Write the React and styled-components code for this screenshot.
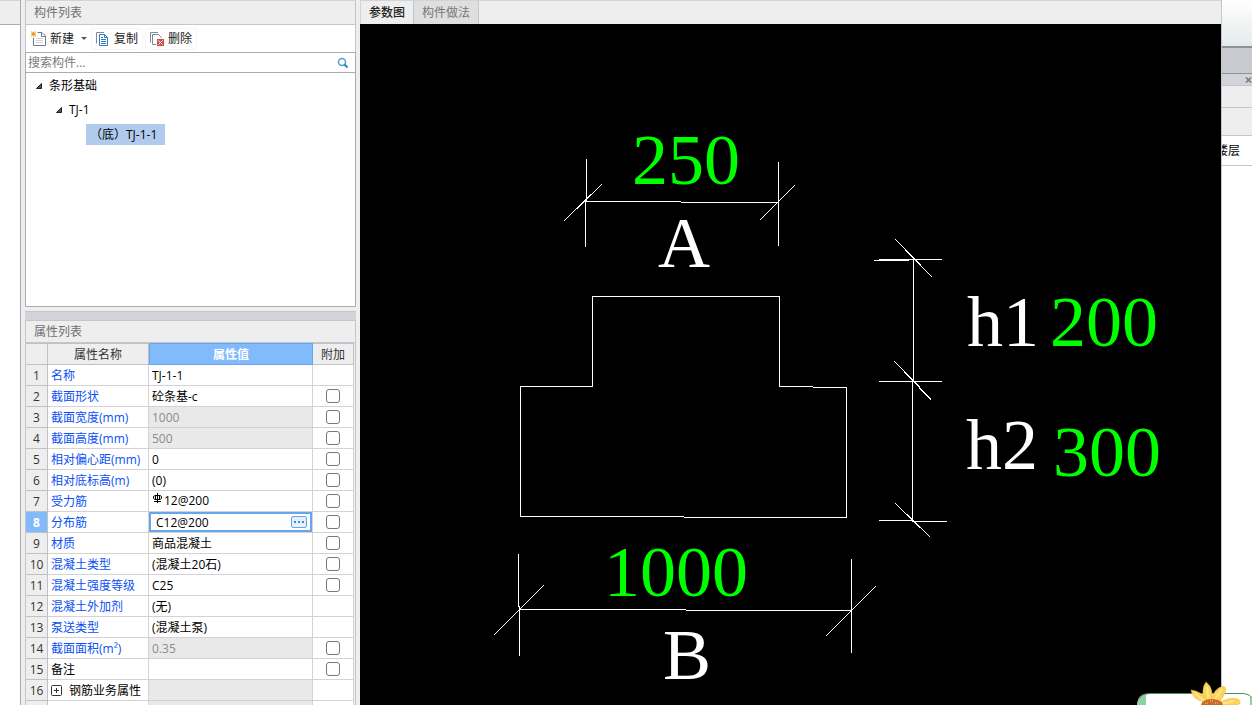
import React, { useState } from 'react';
import styled, { createGlobalStyle } from 'styled-components';

const GlobalStyle = createGlobalStyle`
  * {
    box-sizing: border-box;
  }
  body {
    margin: 0;
    font: 12px/16px "Open Sans", "Noto Sans CJK SC", sans-serif;
    color: #000;
    background: #eeeeee;
  }
  button, input {
    font: inherit;
    color: inherit;
    margin: 0;
  }
`;

const Page = styled.div`
  position: relative;
  display: grid;
  grid-template-columns: 21px 335px minmax(0, 1fr) 30px;
  height: 100vh;
  overflow: hidden;
`;

const LeftEdge = styled.aside`
  display: flex;
  flex-direction: column;
  background: #fff;
  border-right: 1px solid #a9abae;
`;

const LeftEdgeHeader = styled.div`
  height: 25px;
  background: #eeeeee;
  border-top: 1px solid #d3d4d9;
  border-bottom: 1px solid #a9abae;
`;

const Sidebar = styled.div`
  display: flex;
  flex-direction: column;
  min-height: 0;
  padding-left: 4px;
`;

const PanelTitle = styled.h2`
  flex: none;
  height: ${props => props.$tall ? '23px' : '25px'};
  margin: 0;
  padding-left: 8px;
  font-size: 12px;
  font-weight: 400;
  line-height: ${props => props.$tall ? '21px' : '23px'};
  color: #707070;
  border: 1px solid #c4c6ce;
  border-top-color: ${props => props.$tall ? '#c4c6ce' : '#d3d4d9'};
`;

const Toolbar = styled.div`
  flex: none;
  display: flex;
  align-items: center;
  height: 27px;
  gap: 2px;
  padding-left: 2px;
  background: #fff;
  border: solid #c4c6ce;
  border-width: 0 1px;
`;

const ToolButton = styled.button`
  display: flex;
  align-items: center;
  gap: 3px;
  height: 22px;
  padding: ${props => props.$first ? '0 1px 0 2px' : '0 4px 0 3px'};
  color: #222;
  background: none;
  border: 1px solid ${props => props.$first ? 'transparent' : '#f6f6f6'};
  border-radius: 3px;
  svg {
    flex: none;
  }
`;

const Caret = styled.span`
  margin-left: 4px;
  border: 3px solid transparent;
  border-top-color: #555;
  border-bottom-width: 0;
`;

const SearchBox = styled.label`
  flex: none;
  display: flex;
  align-items: center;
  height: 21px;
  padding: 0 6px 0 2px;
  background: #fff;
  border: 1px solid #acacac;
`;

const SearchInput = styled.input`
  flex: 1;
  min-width: 0;
  height: 17px;
  padding: 0;
  border: 0;
  outline: 0;
  background: none;
  &::placeholder {
    color: #7a7a7a;
    opacity: 1;
  }
`;

const Tree = styled.ul`
  flex: none;
  height: 234px;
  margin: 0;
  padding: 1px 0 0;
  list-style: none;
  background: #fff;
  border: 1px solid #acacac;
  border-top: 0;
`;

const TreeRow = styled.li`
  display: flex;
  align-items: center;
  height: 24px;
  gap: 6px;
  padding-left: ${props => props.$indent};
`;

const TreeLabel = styled.span`
  padding: ${props => props.$selected ? '2px 8px 2px 4px' : '0'};
  line-height: ${props => props.$selected ? '17px' : '16px'};
  background: ${props => props.$selected ? '#b0cbee' : 'none'};
`;

const Splitter = styled.div`
  flex: none;
  height: 9px;
  margin-top: 4px;
  background: #d3d4d9;
  border-top: 1px solid #c4c6ce;
`;

const TableArea = styled.div`
  flex: 1;
  min-height: 0;
  overflow: hidden;
  padding-right: 1px;
  background: #eeeeee;
  border: solid #c4c6ce;
  border-width: 0 1px;
`;

const PropTable = styled.table`
  width: 100%;
  table-layout: fixed;
  border-collapse: separate;
  border-spacing: 0;
`;

const HeadCell = styled.th`
  height: 22px;
  padding: 2px 0 0;
  font-weight: ${props => props.$active ? '700' : '400'};
  color: ${props => props.$active ? '#fff' : '#333'};
  background: ${props => props.$active ? '#82bbfb' : '#eeeeee'};
  border: 1px solid ${props => props.$active ? '#65a7ec' : '#bfc1c6'};
  border-left-width: ${props => props.$active ? '1px' : '0'};
`;

const RowNumber = styled.th`
  height: 21px;
  padding: 2px 0 0;
  font-weight: ${props => props.$active ? '700' : '400'};
  color: ${props => props.$active ? '#fff' : '#333'};
  background: ${props => props.$active ? '#82bbfb' : '#eeeeee'};
  border: solid #bfc1c6;
  border-width: 0 1px 1px 0;
`;

const Cell = styled.td`
  height: 21px;
  padding: 2px 0 0 3px;
  white-space: nowrap;
  overflow: hidden;
  color: ${props => props.$color || '#000'};
  background: ${props => props.$locked ? '#e9e9e9' : '#fff'};
  border: solid #d3d3d3;
  border-width: 0 1px 1px 0;
`;

const EditCell = styled(Cell)`
  padding: 0;
`;

const RebarCell = styled(Cell)`
  padding-top: 0;
`;

const CheckCell = styled(Cell)`
  padding: 0;
  text-align: center;
`;

const CheckBox = styled.input`
  appearance: none;
  display: block;
  width: 14px;
  height: 14px;
  margin: 0 auto;
  background: #fff;
  border: 1px solid #777;
  border-radius: 3px;
`;

const ValueLine = styled.span`
  display: flex;
  align-items: center;
  gap: 6px;
`;

const RebarLine = styled(ValueLine)`
  align-items: flex-start;
  gap: 1px;
  padding-left: 1px;
`;

const Editor = styled.div`
  display: flex;
  align-items: center;
  height: 20px;
  padding: 0 3px 0 5px;
  border: 2px solid #65a7ec;
`;

const EditorInput = styled.input`
  flex: 1;
  min-width: 0;
  height: 16px;
  padding: 1px 0 0;
  border: 0;
  outline: 0;
  background: none;
`;

const MoreButton = styled.button`
  display: flex;
  align-items: center;
  justify-content: center;
  width: 16px;
  height: 12px;
  padding: 0;
  background: #e4f1fd;
  border: 1px solid #65a7ec;
  border-radius: 2px;
`;

const Main = styled.main`
  display: flex;
  flex-direction: column;
  min-width: 0;
  min-height: 0;
  margin-left: 4px;
  border-right: 1px solid #c4c6ce;
`;

const Tabs = styled.div`
  flex: none;
  display: flex;
  height: 24px;
  border: solid #d3d4d9;
  border-width: 1px 0 0 1px;
`;

const Tab = styled.button`
  padding: 0 8px;
  color: ${props => props.$active ? '#222' : '#777'};
  font-weight: ${props => props.$active ? '500' : '400'};
  background: ${props => props.$active ? '#eeeeee' : '#dfdfdf'};
  border: solid #c4c6ce;
  border-width: 0 1px 0 0;
`;

const Canvas = styled.div`
  flex: 1;
  min-height: 0;
  background: #000;
  svg {
    display: block;
    width: 100%;
    height: 100%;
  }
`;

const DrawingText = styled.text`
  font: 72px "Liberation Serif", serif;
  fill: ${props => props.$value ? '#00ff00' : '#fff'};
  text-anchor: ${props => props.$centered ? 'middle' : 'start'};
`;

const RightEdge = styled.aside`
  display: flex;
  flex-direction: column;
  overflow: hidden;
  background: #fff;
`;

const EdgeBand = styled.div`
  flex: none;
  display: flex;
  align-items: center;
  justify-content: flex-end;
  height: ${props => props.$height};
  padding-right: ${props => props.$pad || '0'};
  background: ${props => props.$background};
  border-bottom: ${props => props.$line || '1px solid #c4c6ce'};
  white-space: nowrap;
`;

const CloseButton = styled.button`
  display: flex;
  padding: 0;
  background: none;
  border: 0;
`;

const Sticker = styled.div`
  position: absolute;
  right: 0;
  bottom: 0;
  svg {
    display: block;
  }
`;

const NewIcon = () => (
  <svg width="16" height="16" viewBox="0 0 16 16" fill="none" aria-hidden="true">
    <path d="M6.5 1.5H11L14.5 5V14.5H2.5V7" stroke="#6e7d88" />
    <path d="M10.5 1.5V5.5H14.5" stroke="#6e7d88" />
    <path d="M5 7.5H12M5 9.5H12M5 11.5H12" stroke="#cfd5d9" />
    <path d="M0 0.5H1V1.5H2V0.5H3V1.5H4V0.5H5V1.5H4V2.5H5V3.5H4V4.5H5V5.5H4V4.5H3V5.5H2V4.5H1V5.5H0V4.5H1V3.5H0V2.5H1V1.5H0Z" fill="#f39a1d" />
  </svg>
);

const CopyIcon = () => (
  <svg width="16" height="16" viewBox="0 0 16 16" fill="none" aria-hidden="true">
    <path d="M1.5 12.5V1.5H9" stroke="#7b8a95" />
    <path d="M4.5 3.5H9.5L12.5 6.5V14.5H4.5Z" stroke="#2f7ac6" />
    <path d="M9.5 3.5V6.5H12.5" stroke="#2f7ac6" />
    <path d="M6 6.5H8M6 8.5H11M6 10.5H11M6 12.5H11" stroke="#2f7ac6" />
  </svg>
);

const DeleteIcon = () => (
  <svg width="16" height="16" viewBox="0 0 16 16" fill="none" aria-hidden="true">
    <path d="M1.5 11.5V1.5H9" stroke="#7b8a95" />
    <path d="M7 13.5H3.5V3.5H9.5L12.5 6.5V7" stroke="#7b8a95" />
    <rect x="8" y="8" width="7" height="7" fill="#d2504f" />
    <path d="M9.5 9.5L13.5 13.5M13.5 9.5L9.5 13.5" stroke="#fff" />
  </svg>
);

const SearchIcon = () => (
  <svg width="12" height="12" viewBox="0 0 12 12" fill="none" aria-hidden="true">
    <circle cx="5" cy="5" r="3.5" stroke="#4b9fd2" strokeWidth="1.5" />
    <path d="M7.5 7.5L10.5 10.5" stroke="#2c7fb8" strokeWidth="2" />
  </svg>
);

const ExpandedIcon = () => (
  <svg width="8" height="8" viewBox="0 0 8 8" aria-hidden="true">
    <path d="M6.5 1.5V6.5H1.5Z" fill="#555" stroke="#222" />
  </svg>
);

const PlusIcon = () => (
  <svg width="12" height="12" viewBox="0 0 12 12" fill="none" stroke="#333" aria-hidden="true">
    <rect x="0.5" y="0.5" width="10" height="10" rx="1" />
    <path d="M3 5.5H8M5.5 3V8" />
  </svg>
);

const RebarIcon = () => (
  <svg width="10" height="12" viewBox="0 0 10 12" fill="none" stroke="#000" aria-hidden="true">
    <path d="M4.5 0V10M2.5 2V7M6.5 2V7M1 8.5H8" />
    <path d="M2 2.5H7L8.5 3.5V5.5L7 6.5H2L0.5 5.5V3.5Z" />
  </svg>
);

const Flower = () => (
  <svg width="116" height="24" viewBox="0 0 116 24" aria-hidden="true">
    <path d="M1 24Q2 13 13 13H104Q115 13 116 20V24Z" fill="#fff" />
    <path d="M1 24Q2 13 10 13V24Z" fill="#8ed0a4" />
    <path d="M114 24V15L116 18V24Z" fill="#8ed0a4" />
    <path d="M3 18Q6 12.5 13 12.5H106Q113 12.5 116 17" fill="none" stroke="#4c9154" />
    <g fill="#fbd45c" stroke="#eeb03a" strokeWidth="0.5">
      <path d="M68 21Q65 7 70 1Q78 7 76 21Z" />
      <path d="M68 21Q56 18 55 9Q65 10 71 19Z" />
      <path d="M75 20Q77 8 87 5Q94 7 83 22Z" />
      <path d="M81 24Q91 15 102 18Q107 22 101 24Z" />
    </g>
    <path d="M59 12L68 20M71 6L72 17M86 8L79 18M98 20L86 23" stroke="#ffe58c" strokeWidth="2" />
    <ellipse cx="76" cy="24" rx="11" ry="6" fill="#c46c2e" />
    <path d="M69 22H72M74 20H77M79 22H82" stroke="#ed9b4a" strokeWidth="2" strokeDasharray="1 1" />
  </svg>
);

const BLUE = '#0a50f5';
const GREY = '#8c8c8c';

const rows = [
  { name: '名称', value: 'TJ-1-1', noCheck: true },
  { name: '截面形状', value: '砼条基-c' },
  { name: '截面宽度(mm)', value: '1000', locked: true },
  { name: '截面高度(mm)', value: '500', locked: true },
  { name: '相对偏心距(mm)', value: '0' },
  { name: '相对底标高(m)', value: '(0)' },
  { name: '受力筋', value: '12@200', rebar: true },
  { name: '分布筋', value: 'C12@200', editing: true },
  { name: '材质', value: '商品混凝土' },
  { name: '混凝土类型', value: '(混凝土20石)' },
  { name: '混凝土强度等级', value: 'C25' },
  { name: '混凝土外加剂', value: '(无)', noCheck: true },
  { name: '泵送类型', value: '(混凝土泵)', noCheck: true },
  { name: '截面面积(m²)', value: '0.35', locked: true },
  { name: '备注', value: '', plain: true },
  { name: '钢筋业务属性', value: '', locked: true, plain: true, group: true, noCheck: true },
  { name: '', value: '', locked: true, noCheck: true },
];

const ValueCell = ({ row }) => {
  const [value, setValue] = useState(row.value);
  if (row.editing) {
    return (
      <EditCell>
        <Editor>
          <EditorInput aria-label={row.name} value={value} onChange={e => setValue(e.target.value)} />
          <MoreButton type="button" aria-label="更多">
            <svg width="10" height="2" viewBox="0 0 10 2" aria-hidden="true">
              <path d="M0 1H2M4 1H6M8 1H10" stroke="#3c87cf" strokeWidth="2" />
            </svg>
          </MoreButton>
        </Editor>
      </EditCell>
    );
  }
  if (row.rebar) {
    return <RebarCell><RebarLine><RebarIcon />{value}</RebarLine></RebarCell>;
  }
  return <Cell $locked={row.locked} $color={row.locked ? GREY : '#000'}>{value}</Cell>;
};

const PropertyTable = () => (
  <PropTable>
    <colgroup>
      <col style={{ width: 22 }} />
      <col style={{ width: 101 }} />
      <col />
      <col style={{ width: 41 }} />
    </colgroup>
    <thead>
      <tr>
        <HeadCell />
        <HeadCell>属性名称</HeadCell>
        <HeadCell $active>属性值</HeadCell>
        <HeadCell>附加</HeadCell>
      </tr>
    </thead>
    <tbody>
      {rows.map((row, index) => (
        <tr key={index}>
          <RowNumber scope="row" $active={row.editing}>{row.name ? index + 1 : ''}</RowNumber>
          <Cell $color={row.plain ? '#000' : BLUE}>
            {row.group ? <ValueLine><PlusIcon />{row.name}</ValueLine> : row.name}
          </Cell>
          <ValueCell row={row} />
          <CheckCell>
            {!row.noCheck && <CheckBox type="checkbox" aria-label={`附加 ${row.name}`} />}
          </CheckCell>
        </tr>
      ))}
    </tbody>
  </PropTable>
);

const SectionDrawing = () => (
  <svg viewBox="0 0 861 681" role="img" aria-label="砼条基-c">
    <g transform="translate(0.5 0.5)" fill="none" stroke="#fff" strokeLinecap="square" shapeRendering="crispEdges">
      {/* footing outline */}
      <path d="M160 492V362H232V272H419V362H452M453 363H486V493H324M323 492H160" />
      {/* A */}
      <path d="M226 135V177M225 177V222M418 138V221M223 177H320M321 178H418" />
      <path d="M204 196L241 160M400 195L434 161" />
      {/* B */}
      <path d="M158 530V582M159 582V631M491 535V628M159 585H325M326 586H491" />
      <path d="M134 610L183 561M466 611L515 562" />
      {/* h1, h2 */}
      <path d="M553 234V356M552 356V496M519 235H581M514 236H548M519 357H581M519 496H552M552 497H586" />
      <path d="M535 215L571 252M534 337L570 374M554 358L570 375M535 479L569 512" />
    </g>
    <DrawingText $value x="272" y="160">250</DrawingText>
    <DrawingText $centered x="324" y="243">A</DrawingText>
    <DrawingText x="607" y="322">h1</DrawingText>
    <DrawingText $value x="690" y="322">200</DrawingText>
    <DrawingText x="606" y="445">h2</DrawingText>
    <DrawingText $value x="693" y="452">300</DrawingText>
    <DrawingText $value x="244" y="572">1000</DrawingText>
    <DrawingText $centered x="327" y="655">B</DrawingText>
  </svg>
);

const App = () => (
  <>
    <GlobalStyle />
    <Page>
      <LeftEdge>
        <LeftEdgeHeader />
      </LeftEdge>
      <Sidebar>
        <PanelTitle>构件列表</PanelTitle>
        <Toolbar>
          <ToolButton type="button" $first><NewIcon />新建<Caret /></ToolButton>
          <ToolButton type="button"><CopyIcon />复制</ToolButton>
          <ToolButton type="button"><DeleteIcon />删除</ToolButton>
        </Toolbar>
        <SearchBox>
          <SearchInput type="text" aria-label="搜索构件" placeholder="搜索构件..." />
          <SearchIcon />
        </SearchBox>
        <Tree>
          <TreeRow $indent="9px"><ExpandedIcon /><TreeLabel>条形基础</TreeLabel></TreeRow>
          <TreeRow $indent="29px"><ExpandedIcon /><TreeLabel>TJ-1</TreeLabel></TreeRow>
          <TreeRow $indent="60px"><TreeLabel $selected>（底）TJ-1-1</TreeLabel></TreeRow>
        </Tree>
        <Splitter />
        <PanelTitle $tall>属性列表</PanelTitle>
        <TableArea>
          <PropertyTable />
        </TableArea>
      </Sidebar>
      <Main>
        <Tabs>
          <Tab type="button" $active>参数图</Tab>
          <Tab type="button">构件做法</Tab>
        </Tabs>
        <Canvas>
          <SectionDrawing />
        </Canvas>
      </Main>
      <RightEdge>
        <EdgeBand $height="48px" $background="linear-gradient(#fff, #e4eaea)" $line="2px solid #8d9296" />
        <EdgeBand $height="26px" $background="#c9cbd1" $line="1px solid #8d9296" />
        <EdgeBand $height="12px" $background="#d3d4d9">
          <CloseButton type="button" aria-label="关闭">
            <svg width="7" height="6" viewBox="0 0 7 6" aria-hidden="true">
              <path d="M1 0.5L6 5.5M6 0.5L1 5.5" stroke="#777" strokeWidth="1.5" />
            </svg>
          </CloseButton>
        </EdgeBand>
        <EdgeBand $height="22px" $background="#eeeeee" />
        <EdgeBand $height="28px" $background="#eeeeee" />
        <EdgeBand $height="30px" $background="#fff" $pad="12px">楼层</EdgeBand>
      </RightEdge>
      <Sticker>
        <Flower />
      </Sticker>
    </Page>
  </>
);

export default App;
